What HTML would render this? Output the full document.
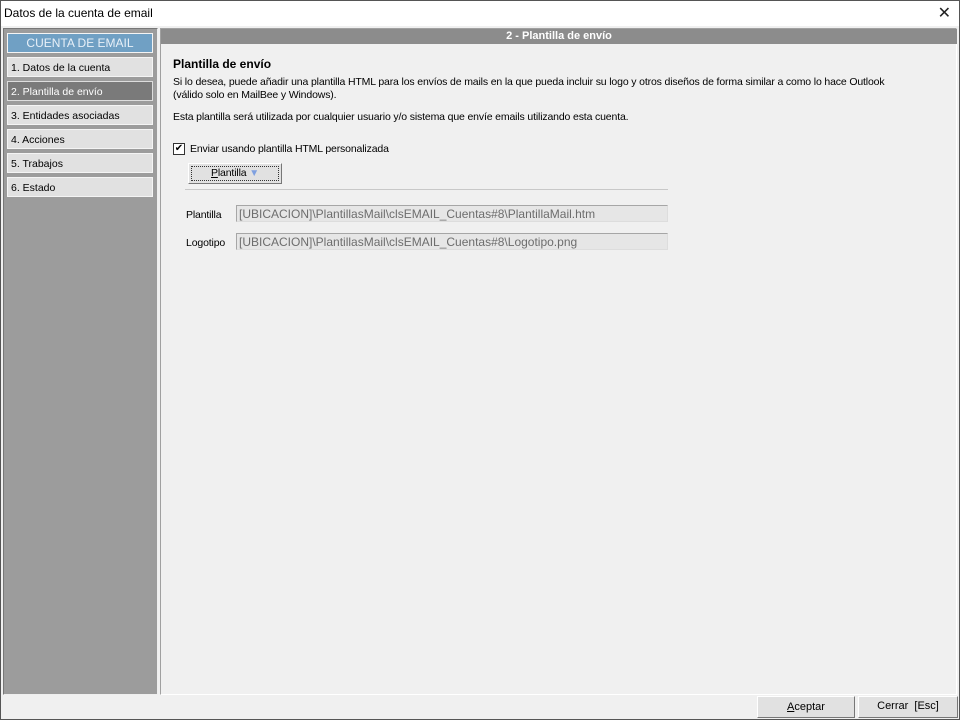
<!DOCTYPE html>
<html><head><meta charset="utf-8"><style>
*{box-sizing:border-box;margin:0;padding:0}
body{width:960px;height:720px;background:#f0f0f0;font-family:"Liberation Sans",sans-serif;font-size:11px;color:#000;position:relative;overflow:hidden}
.abs{position:absolute}
.frame{left:0;top:0;width:960px;height:720px;border:1px solid #555;pointer-events:none}
.title{left:1px;top:1px;width:958px;height:25px;background:#fff;font-size:12px;padding:5px 3px}
.close{right:9px;top:3px;font-size:16px;font-weight:300;color:#222}
.side{left:3px;top:28px;width:155px;height:667px;background:#9c9c9c;border:1px solid #777;border-right-color:#eee;border-bottom-color:#eee}
.item{position:absolute;left:3px;width:146px;height:20px;background:#e1e1e1;border:1px solid #f4f4f4;padding:4px 3px;font-size:10.5px}
.main{left:160px;top:28px;width:797px;height:667px;border:1px solid #a0a0a0;border-right-color:#fff;border-bottom-color:#fff}
.hdr{left:161px;top:29px;width:796px;height:15px;background:#8c8c8c;color:#fff;font-weight:bold;text-align:center;font-size:11px;line-height:15px}
.inp{background:#e6e6e6;border:1px solid #a6a6a6;border-right-color:#ddd;border-bottom-color:#ddd;height:17px;color:#6d6d6d;font-size:12px;padding:1px 2px;width:432px;line-height:14px}
.btn{background:#e1e1e1;border:1px solid #fff;border-right-color:#777;border-bottom-color:#777;text-align:center;font-size:11px}
.p{font-size:10.5px;letter-spacing:-0.15px}
</style></head><body>
<div class="abs title">Datos de la cuenta de email</div>
<div class="abs close">✕</div>
<div class="abs side">
<div class="item" style="top:4px;background:#70a0c4;color:#e8f0f8;text-align:center;font-size:12px;padding:2px">CUENTA DE EMAIL</div>
<div class="item" style="top:28px">1. Datos de la cuenta</div>
<div class="item" style="top:52px;background:#7a7a7a;color:#fff;border-color:#ddd">2. Plantilla de envío</div>
<div class="item" style="top:76px">3. Entidades asociadas</div>
<div class="item" style="top:100px">4. Acciones</div>
<div class="item" style="top:124px">5. Trabajos</div>
<div class="item" style="top:148px">6. Estado</div>
</div>
<div class="abs main"></div>
<div class="abs hdr">2 - Plantilla de envío</div>
<div class="abs" style="left:173px;top:57px;font-weight:bold;font-size:12px">Plantilla de envío</div>
<div class="abs p" style="left:173px;top:76px;line-height:13px">Si lo desea, puede añadir una plantilla HTML para los envíos de mails en la que pueda incluir su logo y otros diseños de forma similar a como lo hace Outlook<br>(válido solo en MailBee y Windows).</div>
<div class="abs p" style="left:173px;top:111px">Esta plantilla será utilizada por cualquier usuario y/o sistema que envíe emails utilizando esta cuenta.</div>
<div class="abs" style="left:173px;top:143px;width:12px;height:12px;border:1px solid #333;background:#fff;font-size:10px;line-height:10px;text-align:center">✔</div>
<div class="abs p" style="left:190px;top:143px">Enviar usando plantilla HTML personalizada</div>
<div class="abs btn" style="left:188px;top:163px;width:94px;height:21px;padding:2px"><div class="p" style="border:1px dotted #333;height:15px;line-height:13px"><u>P</u>lantilla <span style="color:#7fa0e0;font-size:10px">▼</span></div></div>
<div class="abs" style="left:185px;top:189px;width:483px;border-top:1px solid #c8c8c8"></div>
<div class="abs p" style="left:186px;top:209px">Plantilla</div>
<div class="abs inp" style="left:236px;top:205px">[UBICACION]\PlantillasMail\clsEMAIL_Cuentas#8\PlantillaMail.htm</div>
<div class="abs p" style="left:186px;top:237px">Logotipo</div>
<div class="abs inp" style="left:236px;top:233px">[UBICACION]\PlantillasMail\clsEMAIL_Cuentas#8\Logotipo.png</div>
<div class="abs btn" style="left:757px;top:696px;width:98px;height:22px;line-height:20px"><u>A</u>ceptar</div>
<div class="abs btn" style="left:858px;top:696px;width:100px;height:22px;line-height:19px">Cerrar &nbsp;[Esc]</div>
<div class="abs frame"></div>
</body></html>
